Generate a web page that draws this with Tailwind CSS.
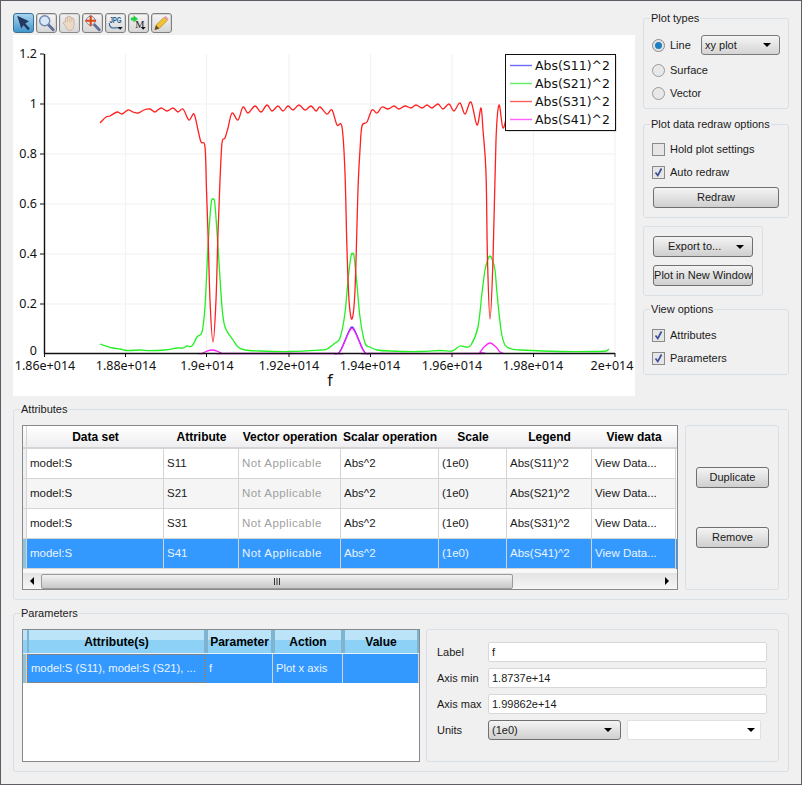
<!DOCTYPE html>
<html lang="en">
<head>
  <meta charset="UTF-8">
  <title>Plot</title>
  <script src="https://cdn.jsdelivr.net/npm/@tailwindcss/browser@4"></script>
</head>
<body class="bg-[#f0f0f0]">
<div class="w-[802px] h-[785px] overflow-hidden bg-[#f0f0f0] border border-[#5d5d66] px-3 pt-3 text-[11px] text-[#1a1a1a] font-['Liberation_Sans',sans-serif] leading-none">

  <!-- top: plot and side options -->
  <div class="flex h-[384px]">
    <div class="w-[622px]">
      <div class="flex gap-[2px] h-[22px]">
        <button class="w-[21px] h-[20px] rounded-[3px] border border-[#3f6f93] bg-linear-to-b from-[#a5d4ee] to-[#3f97cc]">
          <svg viewBox="0 0 20 20" class="w-full h-full"><path d="M3 2 L16 8 L12 10.5 L17 16 L15 18 L10 12.5 L7.5 16 Z" fill="#23375f"/></svg>
        </button>
        <button class="w-[21px] h-[20px] rounded-[3px] border border-[#808080] shadow-[inset_0_0_0_1px_#d4d4d4] bg-linear-to-b from-[#f6f6f6] to-[#d6d6d6]">
          <svg viewBox="0 0 20 20" class="w-full h-full"><path d="M11.5 11.5 L17.5 17.5" stroke="#5f6f9a" stroke-width="3.2" stroke-linecap="round"/><circle cx="8" cy="7.5" r="5.6" fill="#d6e7f6" stroke="#7088b0" stroke-width="1.5"/></svg>
        </button>
        <button class="w-[21px] h-[20px] rounded-[3px] border border-[#8a8a8a] shadow-[inset_0_0_0_1px_#d8d8d8] bg-linear-to-b from-[#f0f0f0] to-[#d8d8d8]">
          <svg viewBox="0 0 20 20" class="w-full h-full"><path d="M5.5 9 L5.5 4.5 Q6.7 3.3 7.8 4.5 L7.8 2.8 Q9 1.8 10.2 2.8 L10.2 3 Q11.7 2.4 12.5 4 L12.5 5 Q14.2 4.2 15 5.8 L15 12 Q15 16.5 12 18 L8.5 18 Q6.5 16 5.3 13 L3 10 Q3.8 8 5.5 9 Z" fill="#ecd9c6" stroke="#bfa893" stroke-width="0.8"/><path d="M7.8 4.5V9M10.2 3V9M12.5 5V9" stroke="#cdb6a0" stroke-width="0.7"/></svg>
        </button>
        <button class="w-[21px] h-[20px] rounded-[3px] border border-[#808080] shadow-[inset_0_0_0_1px_#d4d4d4] bg-linear-to-b from-[#f6f6f6] to-[#d6d6d6]">
          <svg viewBox="0 0 20 20" class="w-full h-full"><path d="M11.5 11.5 L17.5 17.5" stroke="#5f6f9a" stroke-width="3.2" stroke-linecap="round"/><circle cx="8" cy="7.5" r="5" fill="#f3e2d4" stroke="#7088b0" stroke-width="1"/><path d="M8 1.5 V13.5 M2 7.5 H14" stroke="#d8481c" stroke-width="2.2"/></svg>
        </button>
        <button class="w-[21px] h-[20px] rounded-[3px] border border-[#808080] shadow-[inset_0_0_0_1px_#d4d4d4] bg-linear-to-b from-[#f6f6f6] to-[#d6d6d6]">
          <svg viewBox="0 0 20 20" class="w-full h-full"><text transform="translate(10 10.5) scale(.85 1.3)" text-anchor="middle" font-size="8" font-weight="700" fill="#1f5f8f" font-family="Liberation Sans">JPG</text><path d="M3 10 Q3.5 16 8 15.5 Q11 15 14 15.5" fill="none" stroke="#1f5f8f" stroke-width="1.2"/><path d="M12.5 14.5 H18 L15.2 17.5 Z" fill="#111"/></svg>
        </button>
        <button class="w-[21px] h-[20px] rounded-[3px] border border-[#808080] shadow-[inset_0_0_0_1px_#d4d4d4] bg-linear-to-b from-[#f6f6f6] to-[#d6d6d6]">
          <svg viewBox="0 0 20 20" class="w-full h-full"><path d="M1.5 4 H4.5 V1.5 L9.5 5.5 L4.5 9.5 V7.2 H1.5 Z" fill="#22d040"/><text x="11.5" y="15" text-anchor="middle" font-size="11.5" fill="#222" font-family="Liberation Serif">M</text><path d="M12.5 14.5 H18 L15.2 17.5 Z" fill="#111"/></svg>
        </button>
        <button class="w-[21px] h-[20px] rounded-[3px] border border-[#808080] shadow-[inset_0_0_0_1px_#d4d4d4] bg-linear-to-b from-[#f6f6f6] to-[#d6d6d6]">
          <svg viewBox="0 0 20 20" class="w-full h-full"><path d="M2.5 17.5 L4 12.5 L13 3.5 L16.5 7 L7.5 16 Z" fill="#f2c230" stroke="#a87c18" stroke-width="0.7"/><path d="M13 3.5 L14.5 2 L18 5.5 L16.5 7 Z" fill="#e79ac0"/><path d="M2.5 17.5 L4 12.5 L7.5 16 Z" fill="#5a4a3a"/></svg>
        </button>
      </div>
      <div class="h-[361px] bg-white">
        <svg id="plot" viewBox="13 35 622 361" class="block w-[622px] h-[361px] font-['Noto_Sans',sans-serif]">
          <g stroke="#f2f2f2" stroke-width="1.2">
            <path d="M125.5 54V353M206.5 54V353M289 54V353M370.5 54V353M452 54V353M533.5 54V353M615 54V353"/>
            <path d="M44 104H615M44 154H615M44 204H615M44 254H615M44 304H615"/>
          </g>
          <path id="s21" fill="none" stroke="#22f022" stroke-width="1.3"/>
          <path id="s11" fill="none" stroke="#3030ff" stroke-width="1.3"/>
          <path id="s41" fill="none" stroke="#ff20ff" stroke-width="1.3"/>
          <path id="s31" fill="none" stroke="#ff2020" stroke-width="1.3"/>
          <path d="M44.5 54V353.5H615" fill="none" stroke="#111" stroke-width="1.4"/>
          <path d="M40 54H44M40 104H44M40 154H44M40 204H44M40 254H44M40 304H44M44.5 353V357M125.5 353V357M206.5 353V357M289 353V357M370.5 353V357M452 353V357M533.5 353V357M615 353V357" stroke="#111"/>
          <g font-size="12.5" fill="#111" text-anchor="end">
            <text x="37" y="58">1.2</text>
            <text x="37" y="108">1</text>
            <text x="37" y="158">0.8</text>
            <text x="37" y="208">0.6</text>
            <text x="37" y="258">0.4</text>
            <text x="37" y="308">0.2</text>
            <text x="37" y="355">0</text>
          </g>
          <g font-size="12.5" fill="#111" text-anchor="middle">
            <text x="45" y="370">1.86e+014</text>
            <text x="126" y="370">1.88e+014</text>
            <text x="207" y="370">1.9e+014</text>
            <text x="289" y="370">1.92e+014</text>
            <text x="370" y="370">1.94e+014</text>
            <text x="452" y="370">1.96e+014</text>
            <text x="533" y="370">1.98e+014</text>
            <text x="612" y="370">2e+014</text>
            <text x="330" y="386" font-size="16">f</text>
          </g>
          <rect x="506.5" y="55.5" width="110" height="76" fill="#ccc"/>
          <rect x="505.5" y="54.5" width="110" height="76" fill="#fff" stroke="#111"/>
          <path d="M510 65.5H532" stroke="#6a6aff" stroke-width="1.4"/>
          <path d="M510 83.5H532" stroke="#60f060" stroke-width="1.4"/>
          <path d="M510 101.5H532" stroke="#ff6060" stroke-width="1.4"/>
          <path d="M510 119.5H532" stroke="#ff60ff" stroke-width="1.4"/>
          <g font-size="12.5" fill="#111" font-family="DejaVu Sans">
            <text x="535" y="69.5">Abs(S11)^2</text>
            <text x="535" y="87.5">Abs(S21)^2</text>
            <text x="535" y="105.5">Abs(S31)^2</text>
            <text x="535" y="123.5">Abs(S41)^2</text>
          </g>
        </svg>
      </div>
    </div>

    <div class="ml-2 w-[146px] pt-[5px]">
      <div class="relative h-[91px] border border-[#d8e0e6] rounded-[3px] pl-2 pt-4">
        <span class="absolute left-[6px] -top-[6px] bg-[#f0f0f0] px-[1px]">Plot types</span>
        <div class="flex items-center h-5">
          <div class="w-[13px] h-[13px] rounded-full border border-[#8a8a8a] bg-[#e4e4e4] flex items-center justify-center"><div class="w-[7px] h-[7px] rounded-full bg-[#1e7fc0]"></div></div>
          <span class="ml-[5px] w-[31px]">Line</span>
          <div class="w-[79px] h-5 border border-[#7a7a7a] rounded-[3px] bg-linear-to-b from-[#f5f5f5] to-[#d4d4d4] flex items-center justify-between pl-[3px] pr-[8px]">
            <span>xy plot</span><div class="w-0 h-0 border-x-[4px] border-x-transparent border-t-[4px] border-t-black"></div>
          </div>
        </div>
        <div class="flex items-center h-5 mt-[5px]">
          <div class="w-[13px] h-[13px] rounded-full border border-[#9a9a9a] bg-[#e8e8e8]"></div>
          <span class="ml-[5px]">Surface</span>
        </div>
        <div class="flex items-center h-5 mt-[3px]">
          <div class="w-[13px] h-[13px] rounded-full border border-[#9a9a9a] bg-[#e8e8e8]"></div>
          <span class="ml-[5px]">Vector</span>
        </div>
      </div>

      <div class="relative h-[94px] mt-[15px] border border-[#d8e0e6] rounded-[3px] pl-2 pt-4">
        <span class="absolute left-[6px] -top-[6px] bg-[#f0f0f0] px-[1px]">Plot data redraw options</span>
        <div class="flex items-center h-4">
          <div class="w-[13px] h-[13px] border border-[#8a8a8a] bg-[#e6e6e6]"></div>
          <span class="ml-[5px]">Hold plot settings</span>
        </div>
        <div class="flex items-center h-4 mt-[7px]">
          <div class="w-[13px] h-[13px] border border-[#8a8a8a] bg-[#e6e6e6]"><svg viewBox="0 0 11 11" class="w-full h-full"><path d="M2.5 5.5 L4.8 8.5 L8.5 1.5" fill="none" stroke="#3d4f98" stroke-width="1.7"/></svg></div>
          <span class="ml-[5px]">Auto redraw</span>
        </div>
        <button class="block ml-[1px] mt-[7px] w-[126px] h-[21px] border border-[#707070] rounded-[3px] bg-linear-to-b from-[#f4f4f4] to-[#cfcfcf]">Redraw</button>
      </div>

      <div class="h-[70px] w-[120px] mt-2 border border-[#d8e0e6] rounded-[3px] pl-[9px] pt-[9px]">
        <button class="flex items-center justify-between w-[100px] h-[21px] pl-[14px] pr-[8px] border border-[#707070] rounded-[3px] bg-linear-to-b from-[#f4f4f4] to-[#cfcfcf]">
          <span>Export to...</span><div class="w-0 h-0 border-x-[4px] border-x-transparent border-t-[4px] border-t-black"></div>
        </button>
        <button class="block mt-2 w-[100px] h-[21px] border border-[#707070] rounded-[3px] bg-linear-to-b from-[#f4f4f4] to-[#cfcfcf] whitespace-nowrap">Plot in New Window</button>
      </div>

      <div class="relative h-[66px] mt-[13px] border border-[#d8e0e6] rounded-[3px] pl-2 pt-[17px]">
        <span class="absolute left-[6px] -top-[6px] bg-[#f0f0f0] px-[1px]">View options</span>
        <div class="flex items-center h-4">
          <div class="w-[13px] h-[13px] border border-[#8a8a8a] bg-[#e6e6e6]"><svg viewBox="0 0 11 11" class="w-full h-full"><path d="M2.5 5.5 L4.8 8.5 L8.5 1.5" fill="none" stroke="#3d4f98" stroke-width="1.7"/></svg></div>
          <span class="ml-[5px]">Attributes</span>
        </div>
        <div class="flex items-center h-4 mt-[7px]">
          <div class="w-[13px] h-[13px] border border-[#8a8a8a] bg-[#e6e6e6]"><svg viewBox="0 0 11 11" class="w-full h-full"><path d="M2.5 5.5 L4.8 8.5 L8.5 1.5" fill="none" stroke="#3d4f98" stroke-width="1.7"/></svg></div>
          <span class="ml-[5px]">Parameters</span>
        </div>
      </div>
    </div>
  </div>

  <!-- attributes -->
  <div class="relative mt-[12px] w-[776px] h-[191px] border border-[#d8e0e6] rounded-[3px] pl-2 pt-[15px] flex">
    <span class="absolute left-[6px] -top-[6px] bg-[#f0f0f0] px-[1px]">Attributes</span>
    <div class="w-[656px] h-[165px] border border-[#868a8e] bg-[#f4f4f4] flex flex-col">
      <div class="grid grid-cols-[4px_137px_75px_102px_98px_68px_85px_84px] h-[23px] bg-linear-to-b from-white to-[#eeeef0] border-b-2 border-[#d4d4d4] font-bold text-[12px] text-center items-center text-black whitespace-nowrap">
        <div class="h-full border-r border-[#d4d4d4]"></div>
        <div>Data set</div><div>Attribute</div><div>Vector operation</div><div>Scalar operation</div><div>Scale</div><div>Legend</div><div>View data</div>
      </div>
      <div class="grid grid-cols-[4px_137px_75px_102px_98px_68px_85px_84px] h-[30px] bg-white text-[11.5px] *:border-r *:border-b *:border-[#d4d4d4] *:flex *:items-center *:pl-[3px] *:text-[#1a1a1a]">
        <div class="bg-[#f0f0f0] !pl-0"></div><div>model:S</div><div>S11</div><div class="!text-[#a0a0a0] tracking-[0.45px]">Not Applicable</div><div>Abs^2</div><div>(1e0)</div><div>Abs(S11)^2</div><div>View Data...</div>
      </div>
      <div class="grid grid-cols-[4px_137px_75px_102px_98px_68px_85px_84px] h-[30px] bg-[#f5f5f5] text-[11.5px] *:border-r *:border-b *:border-[#d4d4d4] *:flex *:items-center *:pl-[3px] *:text-[#1a1a1a]">
        <div class="bg-[#f0f0f0] !pl-0"></div><div>model:S</div><div>S21</div><div class="!text-[#a0a0a0] tracking-[0.45px]">Not Applicable</div><div>Abs^2</div><div>(1e0)</div><div>Abs(S21)^2</div><div>View Data...</div>
      </div>
      <div class="grid grid-cols-[4px_137px_75px_102px_98px_68px_85px_84px] h-[30px] bg-white text-[11.5px] *:border-r *:border-b *:border-[#d4d4d4] *:flex *:items-center *:pl-[3px] *:text-[#1a1a1a]">
        <div class="bg-[#f0f0f0] !pl-0"></div><div>model:S</div><div>S31</div><div class="!text-[#a0a0a0] tracking-[0.45px]">Not Applicable</div><div>Abs^2</div><div>(1e0)</div><div>Abs(S31)^2</div><div>View Data...</div>
      </div>
      <div class="grid grid-cols-[4px_137px_75px_102px_98px_68px_85px_84px] h-[30px] bg-[#3399ff] text-[11.5px] *:border-r *:border-b *:border-[#d4d4d4] *:flex *:items-center *:pl-[3px] *:text-[#eaf4ff]">
        <div class="bg-[#8fc4d8] !pl-0"></div><div>model:S</div><div>S41</div><div class="tracking-[0.45px]">Not Applicable</div><div>Abs^2</div><div>(1e0)</div><div>Abs(S41)^2</div><div>View Data...</div>
      </div>
      <div class="h-[4px] bg-[#f8f8f8]"></div>
      <div class="h-[16px] flex items-center bg-linear-to-b from-[#e4e4e4] to-[#f6f6f6]">
        <div class="w-[18px] flex justify-center"><div class="w-0 h-0 border-y-[4px] border-y-transparent border-r-[4px] border-r-black"></div></div>
        <div class="w-[472px] h-[15px] border border-[#9a9a9a] rounded-[2px] bg-linear-to-b from-[#f2f2f2] to-[#c8c8c8] flex items-center justify-center">
          <svg viewBox="0 0 8 7" class="w-2 h-[7px]"><path d="M1.5 0V7M4 0V7M6.5 0V7" stroke="#333"/></svg>
        </div>
        <div class="ml-[152px] w-0 h-0 border-y-[4px] border-y-transparent border-l-[4px] border-l-black"></div>
      </div>
    </div>
    <div class="ml-[7px] w-[94px] h-[165px] border border-[#d8e0e6] rounded-[3px] pl-[10px] pt-[41px]">
      <button class="block w-[73px] h-[21px] border border-[#707070] rounded-[3px] bg-linear-to-b from-[#f4f4f4] to-[#cfcfcf]">Duplicate</button>
      <button class="block mt-[39px] w-[73px] h-[21px] border border-[#707070] rounded-[3px] bg-linear-to-b from-[#f4f4f4] to-[#cfcfcf]">Remove</button>
    </div>
  </div>

  <!-- parameters -->
  <div class="relative mt-[13px] w-[776px] h-[159px] border border-[#d8e0e6] rounded-[3px] pl-2 pt-[15px] flex">
    <span class="absolute left-[6px] -top-[6px] bg-[#f0f0f0] px-[1px]">Parameters</span>
    <div class="w-[398px] h-[133px] border border-[#868a8e] bg-white">
      <div class="grid grid-cols-[4px_179px_67px_70px_76px] h-[23px] font-bold text-[12px] text-center items-center text-black *:h-full *:flex *:items-center *:justify-center *:border-x-2 *:border-[#7fb4d0] *:bg-[linear-gradient(#bce4f9_0%,#bce4f9_45%,#8dd2f6_45%,#8dd2f6_100%)]">
        <div class="!bg-white !border-0"></div><div>Attribute(s)</div><div>Parameter</div><div>Action</div><div>Value</div>
      </div>
      <div class="grid grid-cols-[4px_179px_67px_70px_76px] h-[30px] bg-[#3399ff] text-[11.25px] text-[#eaf4ff] border-t border-[#e8f0f8] *:border-r *:border-[#d4d4d4] *:flex *:items-center *:pl-[3px]">
        <div class="bg-[#8fc4d8] !pl-0"></div>
        <div class="border border-dotted !border-[#c9701f]">model:S (S11), model:S (S21), ...</div>
        <div>f</div><div>Plot x axis</div><div></div>
      </div>
    </div>
    <div class="ml-[6px] w-[353px] h-[133px] border border-[#d8e0e6] rounded-[3px] pl-[10px] pt-3">
      <div class="flex items-center h-5">
        <span class="w-[51px]">Label</span>
        <div class="w-[279px] h-5 border border-[#d8d8d8] rounded-[2px] bg-white flex items-center pl-[3px]">f</div>
      </div>
      <div class="flex items-center h-5 mt-[6px]">
        <span class="w-[51px]">Axis min</span>
        <div class="w-[279px] h-5 border border-[#d8d8d8] rounded-[2px] bg-white flex items-center pl-[3px]">1.8737e+14</div>
      </div>
      <div class="flex items-center h-5 mt-[6px]">
        <span class="w-[51px]">Axis max</span>
        <div class="w-[279px] h-5 border border-[#d8d8d8] rounded-[2px] bg-white flex items-center pl-[3px]">1.99862e+14</div>
      </div>
      <div class="flex items-center h-5 mt-[6px]">
        <span class="w-[51px]">Units</span>
        <div class="w-[133px] h-5 border border-[#707070] rounded-[3px] bg-linear-to-b from-[#f5f5f5] to-[#cfcfcf] flex items-center justify-between pl-[3px] pr-[8px]">
          <span>(1e0)</span><div class="w-0 h-0 border-x-[4px] border-x-transparent border-t-[4px] border-t-black"></div>
        </div>
        <div class="ml-[6px] w-[134px] h-5 border border-[#e0e0e0] rounded-[2px] bg-white flex items-center justify-end pr-[5px]">
          <div class="w-0 h-0 border-x-[4px] border-x-transparent border-t-[4px] border-t-black"></div>
        </div>
      </div>
    </div>
  </div>
</div>

<script>
  // curves traced in page pixels
  const red = [[100,123],[106,117],[110,116],[117,112],[122,114],[128,110],[133,112],[138,113],[144,110],[150,109],[155,112],[161,108],[167,111],[173,108],[178,112],[183,109],[189,120],[194,114],[198,130],[201,142],[205,147],[206.5,190],[208,233],[210,300],[213,342],[216,300],[218,233],[220,180],[222,143],[225,138],[228,128],[232,113],[238,120],[243,107],[248,113],[255,106],[261,112],[267,105],[272,111],[278,106],[283,111],[288,106],[293,110],[299,105],[305,110],[311,106],[316,111],[320,107],[327,114],[332,110],[337,125],[342,127],[345,173],[347,250],[349,300],[352,319],[355,290],[358,190],[360,150],[362,126],[367,122],[372,110],[377,113],[382,107],[388,109],[394,106],[399,109],[405,106],[411,108],[416,105],[422,108],[427,105],[432,108],[438,104],[443,109],[449,104],[454,111],[460,103],[465,114],[471,102],[477,125],[481,108],[483,130],[486,173],[487.5,260],[490,319],[493,260],[496,140],[499,105],[503,128],[508,112],[515,106],[530,104],[560,106],[590,105],[609,106]];
  const green = [[100,344],[106,346],[113,348],[120,349],[127,350.5],[140,350],[150,350.7],[165,350],[177,348],[183,348],[187,346],[192,346],[197,337],[202,332],[205,307],[208,247],[211,205],[213,199],[215,205],[218,247],[222,307],[225,327],[233,340],[238,347],[245,350],[260,351],[290,351.5],[320,350],[327,349],[335,343],[340,338],[345,313],[348,280],[351,256],[352.5,254],[354,256],[357,285],[360,317],[365,343],[370,347],[377,350],[390,351],[420,351.5],[440,350.5],[452,351],[460,346],[466,347],[471,345],[478,327],[482,293],[485,270],[488,259],[490,256],[492,259],[495,270],[497,293],[501,330],[505,345],[512,349],[520,350],[560,351.5],[595,351.5],[606,351],[609,349]];
  const mag = [[198,353.5],[202,353.5],[206,351.5],[212,350],[218,351.5],[222,353.5],[226,353.5],[334,353.5],[338,353.5],[341,350],[345,341],[349,332],[352,328],[355,332],[359,341],[363,350],[366,353.5],[370,353.5],[476,353.5],[480,352],[484,347],[490,343],[496,347],[500,352],[504,353.5]];
  const blue = [[334,353.5],[338,353.5],[341,349.5],[345,340.5],[349,331],[352,327],[355,331],[359,340.5],[363,349.5],[366,353.5],[370,353.5]];

  // catmull-rom through the traced points
  function smooth(p) {
    let d = `M${p[0][0]} ${p[0][1]}`;
    for (let i = 0; i < p.length - 1; i++) {
      const a = p[i - 1] || p[i], b = p[i], c = p[i + 1], e = p[i + 2] || c;
      const c1x = b[0] + (c[0] - a[0]) / 6, c1y = b[1] + (c[1] - a[1]) / 6;
      const c2x = c[0] - (e[0] - b[0]) / 6, c2y = c[1] - (e[1] - b[1]) / 6;
      d += `C${c1x.toFixed(1)} ${c1y.toFixed(1)} ${c2x.toFixed(1)} ${c2y.toFixed(1)} ${c[0]} ${c[1]}`;
    }
    return d;
  }
  document.getElementById('s31').setAttribute('d', smooth(red));
  document.getElementById('s21').setAttribute('d', smooth(green));
  document.getElementById('s41').setAttribute('d', smooth(mag));
  document.getElementById('s11').setAttribute('d', smooth(blue));
</script>
</body>
</html>
